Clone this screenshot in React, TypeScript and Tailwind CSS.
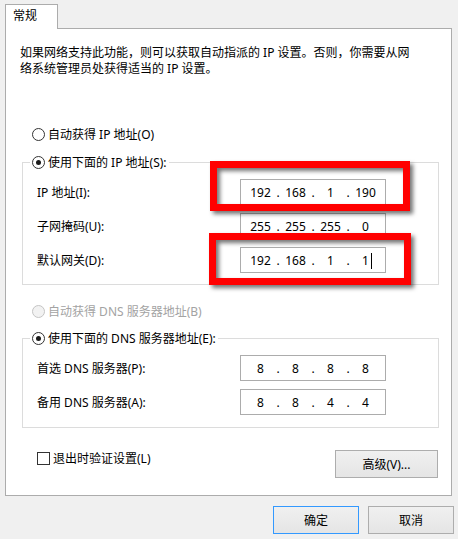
import React from "react";

function Radio({ checked, disabled }: { checked?: boolean; disabled?: boolean }) {
  return (
    <span
      className={
        disabled
          ? "flex w-[13px] h-[13px] shrink-0 rounded-full border border-[#c4c4c4] bg-[#f2f2f2] items-center justify-center"
          : "flex w-[13px] h-[13px] shrink-0 rounded-full border border-[#333333] bg-white items-center justify-center"
      }
    >
      {checked && <span className="w-[5px] h-[5px] rounded-full bg-[#1a1a1a]" />}
    </span>
  );
}

function IpField({ parts, caret }: { parts: string[]; caret?: boolean }) {
  return (
    <div className="w-[146px] h-[26px] shrink-0 border border-[#acacac] bg-white flex items-center pl-[3px]">
      {parts.map((p, i) => (
        <React.Fragment key={i}>
          <span className="w-[33px] flex justify-center">
            <span className="relative">
              {p}
              {caret && i === 3 && (
                <span className="absolute left-full top-[1px] ml-[2px] w-px h-[16px] bg-black" />
              )}
            </span>
          </span>
          {i < 3 && <span className="w-[2px] flex justify-center">.</span>}
        </React.Fragment>
      ))}
    </div>
  );
}

function Row({ label, parts, caret }: { label: string; parts: string[]; caret?: boolean }) {
  return (
    <div className="flex items-center">
      <span className="w-[203px] shrink-0">{label}</span>
      <IpField parts={parts} caret={caret} />
    </div>
  );
}

export default function App() {
  return (
    <div className="relative w-[458px] h-[539px] overflow-hidden bg-[#f0f0f0] pt-[4px] text-[12px] leading-[17px] text-black font-[family-name:'Noto_Sans','Noto_Sans_CJK_SC',sans-serif]">
      <div className="relative z-10 ml-[5px] -mb-px w-[53px] h-[25px] border border-b-0 border-[#acacac] bg-white pl-[7px] pt-[2px]">
        常规
      </div>
      <div className="ml-[5px] w-[447px] h-[468px] border border-[#acacac] bg-white">
        <p className="pl-[14px] pt-[16px] leading-[16px] whitespace-nowrap">
          如果网络支持此功能，则可以获取自动指派的 IP 设置。否则，你需要从网
          <br />
          络系统管理员处获得适当的 IP 设置。
        </p>

        <div className="mt-[49px] pl-[26px] h-[17px] flex items-center gap-[3px]">
          <Radio />
          <span>自动获得 IP 地址(O)</span>
        </div>

        <fieldset className="mt-[11px] ml-[16px] mr-[12px] border border-[#dcdcdc] pl-[7px] pb-[11px]">
          <legend className="px-[2px]">
            <span className="flex items-center gap-[3px] h-[17px]">
              <Radio checked />
              <span>使用下面的 IP 地址(S):</span>
            </span>
          </legend>
          <div className="pl-[7px] pt-[8px] flex flex-col gap-[8px]">
            <Row label="IP 地址(I):" parts={["192", "168", "1", "190"]} />
            <Row label="子网掩码(U):" parts={["255", "255", "255", "0"]} />
            <Row label="默认网关(D):" parts={["192", "168", "1", "1"]} caret />
          </div>
        </fieldset>

        <div className="mt-[18px] pl-[26px] h-[17px] flex items-center gap-[3px] text-[#a3a3a3]">
          <Radio disabled />
          <span>自动获得 DNS 服务器地址(B)</span>
        </div>

        <fieldset className="mt-[10px] ml-[16px] mr-[12px] border border-[#dcdcdc] pl-[7px] pb-[12px]">
          <legend className="px-[2px]">
            <span className="flex items-center gap-[3px] h-[17px]">
              <Radio checked />
              <span>使用下面的 DNS 服务器地址(E):</span>
            </span>
          </legend>
          <div className="pl-[7px] pt-[8px] flex flex-col gap-[8px]">
            <Row label="首选 DNS 服务器(P):" parts={["8", "8", "8", "8"]} />
            <Row label="备用 DNS 服务器(A):" parts={["8", "8", "4", "4"]} />
          </div>
        </fieldset>

        <div className="mt-[22px] pl-[31px] pr-[13px] flex items-start justify-between">
          <div className="h-[17px] flex items-center gap-[3px]">
            <span className="w-[13px] h-[13px] border border-[#333333] bg-white" />
            <span>退出时验证设置(L)</span>
          </div>
          <div className="w-[103px] h-[28px] border border-[#adadad] bg-gradient-to-b from-[#f0f0f0] to-[#e5e5e5] flex items-center justify-center">
            高级(V)...
          </div>
        </div>
      </div>

      <div className="mt-[10px] pr-[4px] flex justify-end gap-[9px]">
        <div className="w-[86px] h-[28px] border border-[#3399ff] bg-gradient-to-b from-[#f0f0f0] to-[#e5e5e5] flex items-center justify-center">
          确定
        </div>
        <div className="w-[86px] h-[28px] border border-[#adadad] bg-gradient-to-b from-[#f0f0f0] to-[#e5e5e5] flex items-center justify-center">
          取消
        </div>
      </div>

      <div className="absolute left-[210px] top-[161px] w-[200px] h-[50px] border-[7px] border-[#ff0000] drop-shadow-[3px_3px_2px_rgba(0,0,0,0.55)]" />
      <div className="absolute left-[209px] top-[233px] w-[202px] h-[52px] border-[7px] border-[#ff0000] drop-shadow-[3px_3px_2px_rgba(0,0,0,0.55)]" />
    </div>
  );
}
